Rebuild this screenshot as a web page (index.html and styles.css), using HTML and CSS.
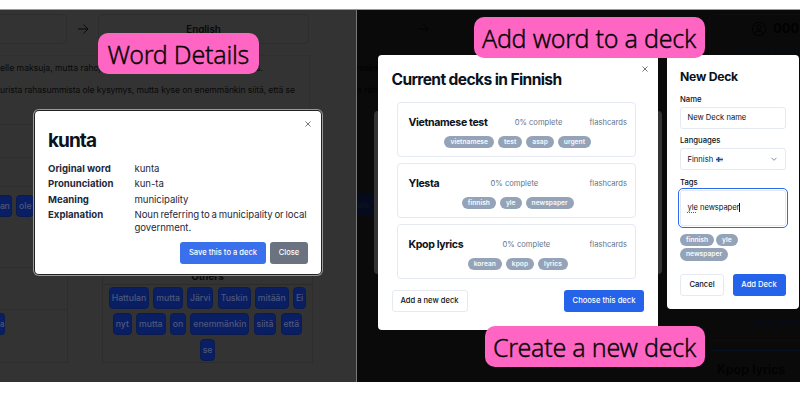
FILE: index.html
```
<!DOCTYPE html>
<html lang="en">
<head>
<meta charset="utf-8">
<title>Flashcard decks</title>
<link rel="stylesheet" href="styles.css">
</head>
<body>
<main class="stage">
  <section class="panel details">
    <div class="langs">
      <div class="lang-box"></div>
      <svg class="arrow" viewBox="0 0 12 12"><path d="M1 6h10M6.5 1.5 11 6l-4.500 4.500"/></svg>
      <div class="lang-box target">English</div>
    </div>
    <div class="article">
      <p><span>elle maksuja, mutta rahoja</span><span>s.</span></p>
      <p class="second">urista rahasummista ole kysymys, mutta kyse on enemmänkin siitä, että se</p>
    </div>
    <div class="rules"><i></i><i></i><i></i></div>
    <div class="verbs"><b class="chip cut">an</b><b class="chip">ole</b></div>
    <div class="tables">
      <div class="side"><div class="side-head"></div><b class="chip cut">a</b></div>
      <div class="others">
        <h4>Others</h4>
        <div class="chips">
          <div class="line"><b class="chip">Hattulan</b><b class="chip">mutta</b><b class="chip">Järvi</b><b class="chip">Tuskin</b><b class="chip">mitään</b><b class="chip">Ei</b></div>
          <div class="line"><b class="chip">nyt</b><b class="chip">mutta</b><b class="chip">on</b><b class="chip">enemmänkin</b><b class="chip">siitä</b><b class="chip">että</b></div>
          <div class="line"><b class="chip">se</b></div>
        </div>
      </div>
    </div>
  </section>

  <section class="panel decks">
    <div class="faint-left">
      <svg class="arrow" viewBox="0 0 12 12"><path d="M1 6h10M6.500 1.500 11 6l-4.500 4.500"/></svg>
      <p>maksu</p>
      <p>a rah</p>
      <b>ole</b>
    </div>
    <div class="faint-right">
      <div class="account">
        <div class="streak"><svg viewBox="0 0 16 16"><circle cx="8" cy="8" r="6.700"/><circle cx="8" cy="6.300" r="2.400"/><path d="M3.800 13c.7-2 2-2.800 4.200-2.800s3.500.8 4.200 2.800"/></svg><span>000</span></div>
        <p>View All Your D</p>
      </div>
      <div class="card-end">View Detail</div>
      <div class="card-next">Kpop lyrics</div>
    </div>
  </section>

  <article class="dialog word">
    <svg class="close" viewBox="0 0 8 8"><path d="m1.500 1.500 5 5m0-5-5 5"/></svg>
    <h1>kunta</h1>
    <dl>
      <dt>Original word</dt><dd>kunta</dd>
      <dt>Pronunciation</dt><dd>kun-ta</dd>
      <dt>Meaning</dt><dd>municipality</dd>
      <dt>Explanation</dt><dd>Noun referring to a municipality or local government.</dd>
    </dl>
    <div class="actions"><button class="btn save">Save this to a deck</button><button class="btn grey">Close</button></div>
  </article>

  <div class="backing"></div>
  <article class="dialog current">
    <svg class="close" viewBox="0 0 8 8"><path d="m1.500 1.500 5 5m0-5-5 5"/></svg>
    <h2>Current decks in Finnish</h2>
    <div class="deck-list">
      <div class="deck">
        <div class="deck-top"><h3>Vietnamese test</h3><span>0% complete</span><span>flashcards</span></div>
        <div class="tags"><b>vietnamese</b><b>test</b><b>asap</b><b>urgent</b></div>
      </div>
      <div class="deck">
        <div class="deck-top"><h3>Ylesta</h3><span>0% complete</span><span>flashcards</span></div>
        <div class="tags"><b>finnish</b><b>yle</b><b>newspaper</b></div>
      </div>
      <div class="deck">
        <div class="deck-top"><h3>Kpop lyrics</h3><span>0% complete</span><span>flashcards</span></div>
        <div class="tags"><b>korean</b><b>kpop</b><b>lyrics</b></div>
      </div>
    </div>
    <div class="foot"><button class="btn outline add">Add a new deck</button><button class="btn blue choose">Choose this deck</button></div>
  </article>

  <article class="dialog new">
    <h2>New Deck</h2>
    <label>Name</label>
    <div class="field">New Deck name</div>
    <label>Languages</label>
    <div class="field select"><span>Finnish</span><svg class="flag" viewBox="0 0 7 5"><path fill="#e4ebf5" d="M0 0h7v5H0z"/><path fill="#24508f" d="M0 1.700h7v1.600H0zM1.800 0h1.600v5H1.800z"/></svg><svg class="chev" viewBox="0 0 8 8"><path d="m1.500 2.800 2.500 2.500 2.500-2.500"/></svg></div>
    <label>Tags</label>
    <div class="field area"><u>yle</u>&nbsp;newspaper<i class="caret"></i></div>
    <div class="tags new-tags"><b>finnish</b><b>yle</b><b>newspaper</b></div>
    <div class="foot"><button class="btn outline cancel">Cancel</button><button class="btn blue create">Add Deck</button></div>
  </article>

  <div class="callout c1">Word Details</div>
  <div class="callout c2">Add word to a deck</div>
  <div class="callout c3">Create a new deck</div>
</main>
</body>
</html>
```
FILE: styles.css
```
* { box-sizing: border-box; }
body { margin: 0; background: #fff; font-family: Inter, "Liberation Sans", sans-serif; }
h1, h2, h3, h4, p, dl, dd { margin: 0; }
button { font-family: inherit; }
svg { fill: none; stroke: currentColor; display: block; }
.stage { position: relative; width: 800px; height: 400px; padding: 9px 0 18px; display: flex; overflow: hidden; }
.panel { height: 373px; overflow: hidden; border-top: 1px solid #999; white-space: nowrap; }

.details { width: 357px; background: #333; border-right: 1px solid #777; color: #090909; }
.langs { display: flex; align-items: center; padding-top: 4px; height: 34px; }
.lang-box { width: 67px; height: 30px; border: 1px solid #2d2d2d; border-left: 0; border-radius: 0 5px 5px 0; }
.arrow { width: 12px; height: 12px; margin: 0 9px 0 10px; }
.lang-box.target { width: 211px; border: 1px solid #2d2d2d; border-radius: 5px; text-align: center; font: 600 9.800px/30px Inter; }
.article { width: 310px; height: 66px; margin-top: 11px; border: 1px solid #2f2f2f; border-left: 0; border-bottom: 0; padding-top: 5px; font-size: 8.600px; line-height: 14px; }
.article p { height: 22px; display: flex; justify-content: space-between; width: 263px; }
.article .second { width: auto; justify-content: flex-start; letter-spacing: -.1px; }
.rules { height: 72px; width: 60px; }
.rules i { display: block; height: 33px; border-bottom: 1px solid #2d2d2d; }
.rules i:first-child { height: 4px; }
.rules i:last-child { height: 29px; }
.verbs { display: flex; gap: 4.500px; height: 74px; padding-top: 2px; }
.chip { height: 22px; border-radius: 4px; background: #0a1f63; color: #4d587a; border: 1px solid #0b1b50; font-size: 8.700px; line-height: 20px; font-weight: 500; padding: 0 2px; letter-spacing: -.03px; }
.chip.cut { border-radius: 0 4px 4px 0; padding-left: 0; border-left: 0; }
.verbs .cut { width: 11.500px; letter-spacing: -.4px; }
.tables { display: flex; height: 96px; }
.side { width: 68px; border: 1px solid #2d2d2d; border-left: 0; margin-right: 34px; }
.side-head { height: 42px; border-bottom: 1px solid #2d2d2d; margin-bottom: 3px; }
.side .chip { display: block; width: 5px; padding: 0; font-size: 8px; }
.others { width: 211px; border: 1px solid #2d2d2d; }
.others h4 { height: 17px; border-bottom: 1px solid #2b2b2b; text-align: center; font-size: 9.800px; line-height: 18px; }
.chips { padding-top: 2px; display: grid; gap: 4px; }
.line { display: flex; justify-content: center; gap: 4.200px; }

.decks { width: 443px; background: #0a0a0a; color: #020202; display: flex; justify-content: space-between; }
.faint-left { width: 90px; font-size: 8.600px; padding-top: 13px; }
.faint-left .arrow { margin: 0 0 26px 60px; }
.faint-left p { height: 22px; line-height: 14px; }
.faint-left b { display: block; width: 20px; height: 22px; margin-top: 89px; background: #050a1d; color: #101522; line-height: 22px; font-weight: 500; }
.faint-right { width: 91px; }
.account { height: 245px; margin-top: 4px; border-left: 1px solid #0e0e0e; border-top: 1px solid #0e0e0e; border-radius: 6px 0 0 0; padding: 5px 0 0 41px; color: #010101; }
.streak { display: flex; align-items: center; gap: 6px; font: 700 13px/17px Inter; }
.streak svg { width: 16px; height: 16px; }
.account p { font-size: 8.600px; line-height: 14px; margin: 7px 0 0 -14px; color: #050a1c; }
.card-end { height: 82px; padding: 56px 0 0 43px; font-size: 8.600px; line-height: 15px; color: #050a1c; border-bottom: 1px solid #0d0d0d; }
.card-next { margin-top: 9px; height: 40px; padding: 10px 8px; border-top: 1px solid #061126; border-radius: 6px 0 0 0; font: 600 12.500px/18px Inter; letter-spacing: 0; }

.dialog { position: absolute; background: #fff; color: #0b1220; border-radius: 4px; white-space: nowrap; }
.close { position: absolute; width: 8px; height: 8px; color: #4b5563; stroke-width: .8; }
.btn { border: 0; border-radius: 3px; height: 22px; padding: 0; font-size: 7.600px; line-height: 22px; font-weight: 500; color: #fff; white-space: nowrap; }
.outline { background: #fff; color: #0b1220; border: 1px solid #e5e9f1; line-height: 20px; }
.blue { background: #2563eb; }

.word { left: 35px; top: 111px; width: 286px; height: 163px; padding: 18px 13px 0; box-shadow: 0 0 0 1px #222, 0 0 0 2px #999; }
.word .close { left: 269px; top: 9px; }
.word h1 { font-size: 19px; line-height: 24px; font-weight: 700; letter-spacing: -.95px; }
.word dl { display: grid; grid-template-columns: 86.500px 1fr; row-gap: 2.500px; margin-top: 8.500px; font-size: 9.600px; line-height: 13px; color: #1e293b; }
.word dt { font-weight: 700; }
.word dd { white-space: normal; letter-spacing: -.06px; word-spacing: -.8px; margin-right: -4px; }
.actions { display: flex; justify-content: flex-end; gap: 4px; margin-top: 8px; }
.save { width: 86px; background: #3b70ec; }
.grey { width: 38px; background: #6b7280; }

.backing { position: absolute; left: 374px; top: 111px; width: 288px; height: 163px; border-radius: 4px; background: #333; }
.current { left: 377.500px; top: 55px; width: 280.500px; height: 275px; padding: 16px 14px 0; }
.current .close { left: 263px; top: 9.500px; }
.current h2 { font-size: 15.600px; line-height: 18px; font-weight: 650; letter-spacing: -.62px; }
.deck-list { display: grid; gap: 6px; padding: 13px 8px 0 5.500px; }
.deck { height: 55px; border: 1px solid #e5e9f1; border-radius: 4px; padding: 11px 8px 0 10.500px; }
.deck-top { display: flex; justify-content: space-between; align-items: center; height: 16px; font-size: 7.600px; color: #64748b; }
.deck-top span { padding-top: 1px; }
.deck-top h3 { color: #0b1220; font-size: 10.600px; font-weight: 650; letter-spacing: -.36px; }
.tags { display: flex; justify-content: center; gap: 4px; padding-top: 5.500px; }
.tags b { height: 12.500px; border-radius: 7px; padding: 0 6px; background: #94a3b8; color: #f8fafc; font-size: 6.700px; line-height: 12px; font-weight: 600; }
.foot { display: flex; justify-content: space-between; }
.current .foot { margin-top: 11px; }
.add { width: 76px; }
.choose { width: 80px; }

.new { left: 667px; top: 55px; width: 132px; height: 253.500px; padding: 13px 13.500px 0 13px; }
.new h2 { font-size: 12.200px; line-height: 17px; font-weight: 650; letter-spacing: -.25px; }
.new label { display: block; font-size: 7.700px; line-height: 10px; font-weight: 500; margin-top: 9.500px; }
.field { height: 22px; margin-top: 2px; border: 1px solid #e5e9f1; border-radius: 3px; padding: 0 6.500px; display: flex; align-items: center; font-size: 7.600px; }
.new .field + label { margin-top: 7.500px; }
.flag { width: 7px; height: 5px; margin-left: 3px; stroke: none; }
.chev { width: 8px; height: 8px; margin-left: auto; color: #64748b; stroke-width: .8; }
.area { height: 36px; margin-top: 2px; outline: 1.300px solid #2f69ee; outline-offset: 1px; letter-spacing: -.06px; }
.area u { text-decoration: underline dotted #dc2626 1px; text-underline-offset: 2px; }
.caret { width: .6px; height: 9px; background: #111; }
.new-tags { justify-content: flex-start; flex-wrap: wrap; gap: 2px; padding-top: 8px; }
.new .foot { margin-top: 13px; }
.cancel { width: 44px; }
.create { width: 53px; }

.callout { position: absolute; height: 41px; border-radius: 10px; background: #ff66c4; color: #050505; text-align: center; font: 300 25px/42px "Noto Sans", sans-serif; letter-spacing: -.23px; -webkit-text-stroke: .35px #050505; white-space: nowrap; }
.c1 { left: 97.500px; top: 33px; width: 161.500px; }
.c2 { left: 473.500px; top: 17px; width: 231px; }
.c3 { left: 484.500px; top: 326px; width: 220px; }
```
